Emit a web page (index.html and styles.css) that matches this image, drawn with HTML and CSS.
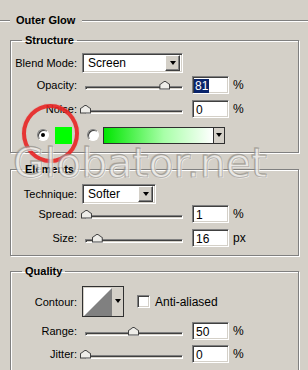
FILE: index.html
```html
<!DOCTYPE html>
<html lang="en">
<head>
    <meta charset="UTF-8">
    <title>Outer Glow</title>
    <link rel="stylesheet" href="styles.css">
</head>
<body>
    <div class="panel">
        <!-- Section title -->
        <div class="title"><span>Outer Glow</span></div>

        <!-- Structure -->
        <fieldset class="group group-structure">
            <legend>Structure</legend>
            <div class="row row-blend">
                <span class="label">Blend Mode:</span>
                <div class="select select-wide">
                    <span class="select-text">Screen</span>
                    <span class="arrow-btn"><i class="arrow"></i></span>
                </div>
            </div>
            <div class="row">
                <span class="label">Opacity:</span>
                <div class="slider"><div class="track"></div><div class="rail"><span class="thumb" style="left: 81%"></span></div></div>
                <div class="field"><span class="selected">81</span></div>
                <span class="unit">%</span>
            </div>
            <div class="row row-noise">
                <span class="label">Noise:</span>
                <div class="slider"><div class="track"></div><div class="rail"><span class="thumb" style="left: 0%"></span></div></div>
                <div class="field">0</div>
                <span class="unit">%</span>
            </div>
            <div class="row row-color">
                <span class="radio checked"></span>
                <span class="swatch"></span>
                <span class="radio radio-second"></span>
                <div class="gradient">
                    <span class="gradient-fill"></span>
                    <span class="gradient-btn"><i class="arrow"></i></span>
                </div>
            </div>
        </fieldset>

        <!-- Elements -->
        <fieldset class="group group-elements">
            <legend>Elements</legend>
            <div class="row">
                <span class="label">Technique:</span>
                <div class="select select-short">
                    <span class="select-text">Softer</span>
                    <span class="arrow-btn"><i class="arrow"></i></span>
                </div>
            </div>
            <div class="row">
                <span class="label">Spread:</span>
                <div class="slider"><div class="track"></div><div class="rail"><span class="thumb" style="left: 1%"></span></div></div>
                <div class="field">1</div>
                <span class="unit">%</span>
            </div>
            <div class="row row-size">
                <span class="label">Size:</span>
                <div class="slider"><div class="track"></div><div class="rail"><span class="thumb" style="left: 12%"></span></div></div>
                <div class="field">16</div>
                <span class="unit">px</span>
            </div>
        </fieldset>

        <!-- Quality -->
        <fieldset class="group group-quality">
            <legend>Quality</legend>
            <div class="row row-contour">
                <span class="label">Contour:</span>
                <div class="contour">
                    <svg class="contour-graph" width="28" height="28" viewBox="0 0 28 28">
                        <rect width="28" height="28" fill="#ffffff"/>
                        <polygon points="0,28 28,0 28,28" fill="#808080"/>
                    </svg>
                    <span class="contour-btn"><i class="arrow"></i></span>
                </div>
                <span class="checkbox"></span>
                <span class="check-label">Anti-aliased</span>
            </div>
            <div class="row row-range">
                <span class="label">Range:</span>
                <div class="slider"><div class="track"></div><div class="rail"><span class="thumb" style="left: 49%"></span></div></div>
                <div class="field">50</div>
                <span class="unit">%</span>
            </div>
            <div class="row row-jitter">
                <span class="label">Jitter:</span>
                <div class="slider"><div class="track"></div><div class="rail"><span class="thumb" style="left: 0%"></span></div></div>
                <div class="field">0</div>
                <span class="unit">%</span>
            </div>
        </fieldset>
    </div>

    <!-- Highlight ring and watermark over the dialog -->
    <div class="ring"></div>
    <div class="watermark">Globator.net</div>
</body>
</html>
```

FILE: styles.css
```css
html {
    overflow: hidden;
}
body {
    margin: 0;
    height: 370px;
    overflow: hidden;
    position: relative;
    background-color: #d4d0c8;
    font-family: "Liberation Sans", Arial, sans-serif;
    font-size: 11px;
    color: #000;
}
.panel {
    padding: 14px 9px 0 10px;
}
.title {
    display: flex;
    align-items: center;
    height: 13px;
    margin-left: -10px;
    margin-right: -9px;
    font-weight: bold;
    line-height: 13px;
}
.title::before,
.title::after {
    content: "";
    height: 0;
    border-top: 1px solid #808080;
    border-bottom: 1px solid #ffffff;
}
.title::before {
    width: 10px;
}
.title::after {
    flex: 1;
}
.title span {
    padding: 0 7px 0 6px;
}
.group {
    margin: 0;
    padding: 0;
    border: 1px solid #808080;
    box-shadow: inset 1px 1px 0 #ffffff, 1px 1px 0 #ffffff;
    min-width: 0;
}
.group legend {
    margin-left: 11px;
    padding: 0 3px;
    font-weight: bold;
    line-height: 13px;
}
.group-structure {
    margin-top: 7px;
    padding: 5px 0 6px;
}
.group-elements {
    margin-top: 10px;
    padding: 8px 0 7px;
}
.group-quality {
    margin-top: 9px;
    padding: 8px 0 20px;
}
.row {
    display: flex;
    align-items: center;
    height: 20px;
}
.group-structure .row {
    height: 22px;
}
.row-noise {
    margin-top: 2px;
}
.row-color {
    margin-top: 4px;
}
.row-size {
    margin-top: 4px;
}
.row-contour {
    height: 31px;
}
.row-range {
    margin-top: 4px;
}
.row-jitter {
    margin-top: 3px;
}
.label {
    width: 66px;
    text-align: right;
    margin-right: 5px;
    white-space: nowrap;
}

/* sunken 3d border */
.select,
.field,
.checkbox {
    box-sizing: border-box;
    background: #ffffff;
    border: 1px solid;
    border-color: #808080 #ffffff #ffffff #808080;
    box-shadow: inset 1px 1px 0 #404040, inset -1px -1px 0 #d4d0c8;
}
.select {
    display: flex;
    align-items: center;
    height: 20px;
    padding: 2px;
    font-size: 12px;
}
.select-wide {
    width: 101px;
}
.select-short {
    width: 74px;
}
.select-text {
    flex: 1;
    padding-left: 3px;
}
.arrow-btn {
    box-sizing: border-box;
    display: flex;
    align-items: center;
    justify-content: center;
    width: 15px;
    height: 16px;
    background: #d4d0c8;
    border: 1px solid;
    border-color: #ffffff #404040 #404040 #ffffff;
    box-shadow: inset -1px -1px 0 #808080;
}
.arrow {
    display: block;
    width: 0;
    height: 0;
    border-left: 3.5px solid transparent;
    border-right: 3.5px solid transparent;
    border-top: 4px solid #000;
}

/* sliders */
.slider {
    position: relative;
    width: 104px;
    height: 9px;
    margin-left: -2px;
    margin-right: 8px;
}
.track {
    position: absolute;
    left: 5px;
    right: 1px;
    bottom: 0;
    height: 4px;
    box-sizing: border-box;
    background: #d4d0c8;
    border: 1px solid;
    border-color: #808080 #ffffff #ffffff #808080;
    box-shadow: inset 1px 1px 0 #404040;
}
.rail {
    position: absolute;
    left: 5px;
    right: 1px;
    top: 0;
    bottom: 0;
}
.thumb {
    position: absolute;
    top: 0;
    width: 11px;
    height: 9px;
    margin-left: -5px;
    background: #404040;
    clip-path: polygon(0 45%, 50% 0, 100% 45%, 100% 100%, 0 100%);
}
.thumb::after {
    content: "";
    position: absolute;
    left: 1px;
    top: 1px;
    right: 1px;
    bottom: 1px;
    background: #eeede9;
    clip-path: polygon(0 45%, 50% 0, 100% 45%, 100% 100%, 0 100%);
}

/* number fields */
.field {
    width: 37px;
    height: 18px;
    padding: 2px 3px;
    font-size: 12px;
    line-height: 14px;
}
.selected {
    display: inline-block;
    margin-left: -2px;
    padding: 0 1px;
    background: #0a246a;
    color: #ffffff;
}
.unit {
    margin-left: 4px;
    font-size: 12px;
}

/* colour choice */
.radio {
    position: relative;
    box-sizing: border-box;
    width: 12px;
    height: 12px;
    margin-left: 26px;
    border-radius: 50%;
    background: #ffffff;
    border: 1px solid;
    border-color: #808080 #ffffff #ffffff #808080;
    box-shadow: inset 1px 1px 0 #404040;
}
.radio.checked::after {
    content: "";
    position: absolute;
    left: 3px;
    top: 3px;
    width: 4px;
    height: 4px;
    border-radius: 50%;
    background: #000;
}
.radio-second {
    margin-left: 15px;
}
.swatch {
    width: 17px;
    height: 17px;
    margin-left: 6px;
    background: #00ff00;
}
.gradient {
    display: flex;
    width: 122px;
    height: 17px;
    margin-left: 4px;
    box-sizing: border-box;
    border: 1px solid #303030;
}
.gradient-fill {
    flex: 1;
    background: linear-gradient(to right, #00e600, #a8ffa8 55%, #ffffff);
}
.gradient-btn {
    display: flex;
    align-items: center;
    justify-content: center;
    width: 10px;
    border-left: 1px solid #303030;
    background: #d4d0c8;
}

/* contour */
.contour {
    display: flex;
    width: 42px;
    height: 31px;
    box-sizing: border-box;
    border: 1px solid #303030;
    background: #d4d0c8;
}
.contour-graph {
    display: block;
    margin: 1px 0 0 1px;
}
.contour-btn {
    display: flex;
    align-items: center;
    justify-content: center;
    flex: 1;
    padding-bottom: 2px;
}
.checkbox {
    width: 13px;
    height: 13px;
    margin-left: 13px;
}
.check-label {
    margin-left: 5px;
    font-size: 12px;
}

/* overlay marks */
.ring {
    position: absolute;
    left: 22px;
    top: 104px;
    width: 49px;
    height: 51px;
    border: 4px solid rgba(232, 36, 36, 0.9);
    border-radius: 50%;
    box-shadow: 0 0 1px rgba(232, 36, 36, 0.6);
}
.watermark {
    position: absolute;
    left: 13px;
    top: 143px;
    font-family: "DejaVu Sans", sans-serif;
    font-size: 41px;
    line-height: 41px;
    color: rgba(230, 228, 222, 0.35);
    -webkit-text-stroke: 1px rgba(130, 126, 120, 0.55);
    text-shadow: 1px 1px 0 rgba(255, 255, 255, 0.7), -1px -1px 0 rgba(160, 156, 150, 0.35);
    white-space: nowrap;
}
```
